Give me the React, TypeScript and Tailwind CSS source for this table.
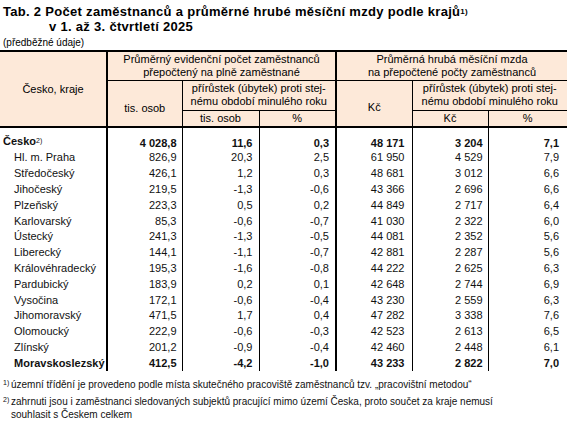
const rows: [string, string, string, string, string, string, string][] = [
  ['Hl. m. Praha', '826,9', '20,3', '2,5', '61 950', '4 529', '7,9'],
  ['Středočeský', '426,1', '1,2', '0,3', '48 681', '3 012', '6,6'],
  ['Jihočeský', '219,5', '-1,3', '-0,6', '43 366', '2 696', '6,6'],
  ['Plzeňský', '223,3', '0,5', '0,2', '44 849', '2 717', '6,4'],
  ['Karlovarský', '85,3', '-0,6', '-0,7', '41 030', '2 322', '6,0'],
  ['Ústecký', '241,3', '-1,3', '-0,5', '44 081', '2 352', '5,6'],
  ['Liberecký', '144,1', '-1,1', '-0,7', '42 881', '2 287', '5,6'],
  ['Královéhradecký', '195,3', '-1,6', '-0,8', '44 222', '2 625', '6,3'],
  ['Pardubický', '183,9', '0,2', '0,1', '42 648', '2 744', '6,9'],
  ['Vysočina', '172,1', '-0,6', '-0,4', '43 230', '2 559', '6,3'],
  ['Jihomoravský', '471,5', '1,7', '0,4', '47 282', '3 338', '7,6'],
  ['Olomoucký', '222,9', '-0,6', '-0,3', '42 523', '2 613', '6,5'],
  ['Zlínský', '201,2', '-0,9', '-0,4', '42 460', '2 448', '6,1'],
]

function NumCells({ v, bold }: { v: string[]; bold?: boolean }) {
  const w = bold ? 'font-bold' : ''
  return (
    <>
      <td className={`border-r border-black pr-[5px] text-right ${w}`}>{v[0]}</td>
      <td className={`border-r border-black pr-[6px] text-right ${w}`}>{v[1]}</td>
      <td className={`border-r-2 border-black pr-[6px] text-right ${w}`}>{v[2]}</td>
      <td className={`border-r border-black pr-[7px] text-right ${w}`}>{v[3]}</td>
      <td className={`border-r border-black pr-[5px] text-right ${w}`}>{v[4]}</td>
      <td className={`pr-[8px] text-right ${w}`}>{v[5]}</td>
    </>
  )
}

export default function App() {
  return (
    <div className="w-[567px] h-[423px] bg-white text-black font-['Liberation_Sans',Arial,sans-serif] overflow-hidden">
      <div className="pt-[4px] pl-[3px] text-[13px] font-bold leading-[15px] tracking-[0.3px]">
        <div>
          Tab. 2 Počet zaměstnanců a průměrné hrubé měsíční mzdy podle krajů
          <sup className="text-[8px] relative -top-[2px]">1)</sup>
        </div>
        <div className="pl-[46px]">v 1. až 3. čtvrtletí 2025</div>
      </div>
      <div className="pl-[3px] mt-[3px] text-[10px] leading-[12px]">(předběžné údaje)</div>

      <table className="mt-[1px] w-[567px] table-fixed border-collapse border-t-2 border-black text-[11px] leading-[13px] whitespace-nowrap">
        <colgroup>
          <col className="w-[107px]" />
          <col className="w-[75px]" />
          <col className="w-[77px]" />
          <col className="w-[77px]" />
          <col className="w-[76px]" />
          <col className="w-[76px]" />
          <col className="w-[79px]" />
        </colgroup>
        <thead className="bg-[#fde9d9] text-center">
          <tr className="h-[29px]">
            <th rowSpan={3} className="font-normal border-r-2 border-b-2 border-black">
              Česko, kraje
            </th>
            <th colSpan={3} className="font-normal border-r-2 border-b border-black">
              Průměrný evidenční počet zaměstnanců
              <br />
              přepočtený na plně zaměstnané
            </th>
            <th colSpan={3} className="font-normal border-b border-black">
              Průměrná hrubá měsíční mzda
              <br />
              na přepočtené počty zaměstnanců
            </th>
          </tr>
          <tr className="h-[30px]">
            <th rowSpan={2} className="font-normal border-r border-b-2 border-black pt-[10px]">
              tis. osob
            </th>
            <th colSpan={2} className="font-normal border-r-2 border-b border-black">
              přírůstek (úbytek) proti stej-
              <br />
              nému období minulého roku
            </th>
            <th rowSpan={2} className="font-normal border-r border-b-2 border-black pt-[8px]">
              Kč
            </th>
            <th colSpan={2} className="font-normal border-b border-black">
              přírůstek (úbytek) proti stej-
              <br />
              nému období minulého roku
            </th>
          </tr>
          <tr className="h-[17px]">
            <th className="font-normal border-r border-b-2 border-black">tis. osob</th>
            <th className="font-normal border-r-2 border-b-2 border-black">%</th>
            <th className="font-normal border-r border-b-2 border-black">Kč</th>
            <th className="font-normal border-b-2 border-black">%</th>
          </tr>
        </thead>
        <tbody className="text-[#111]">
          <tr className="h-[23px] align-bottom">
            <td className="border-r-2 border-black pl-[3px] pb-[2px] font-bold">
              Česko<sup className="text-[7px] font-normal relative -top-[2px]">2)</sup>
            </td>
            <NumCells v={['4 028,8', '11,6', '0,3', '48 171', '3 204', '7,1']} bold />
          </tr>
          {rows.map((r) => (
            <tr key={r[0]} className="h-[15.8px]">
              <td className="border-r-2 border-black pl-[14px]">{r[0]}</td>
              <NumCells v={r.slice(1)} />
            </tr>
          ))}
          <tr className="h-[15.8px]">
            <td className="border-r-2 border-black pl-[14px] font-bold">Moravskoslezský</td>
            <NumCells v={['412,5', '-4,2', '-1,0', '43 233', '2 822', '7,0']} bold />
          </tr>
        </tbody>
      </table>

      <div className="mt-[7px] pl-[3px] text-[10px] leading-[13px] text-[#111]">
        <div className="flex">
          <span className="w-[8px] text-[7px] leading-[9px]">1)</span>
          <span>územní třídění je provedeno podle místa skutečného pracoviště zaměstnanců tzv. „pracovištní metodou“</span>
        </div>
        <div className="flex mt-[4px]">
          <span className="w-[8px] shrink-0 text-[7px] leading-[9px]">2)</span>
          <span>
            zahrnuti jsou i zaměstnanci sledovaných subjektů pracující mimo území Česka, proto součet za kraje nemusí
            <br />
            souhlasit s Českem celkem
          </span>
        </div>
      </div>
    </div>
  )
}
